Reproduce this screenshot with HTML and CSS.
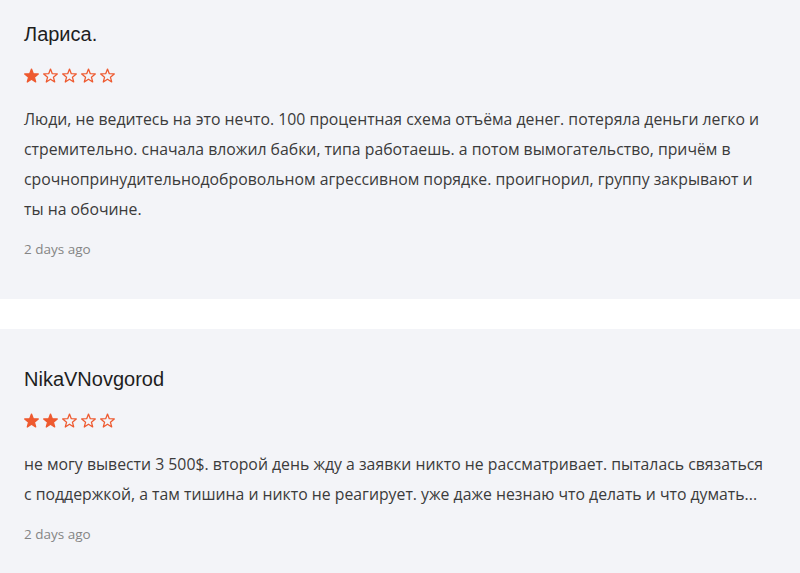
FILE: index.html
```html
<!DOCTYPE html>
<html>
	<head>
		<meta charset="UTF-8">
		<title>Отзывы</title>
		<link rel="stylesheet" href="styles.css">
	</head>
	<body>
		<svg width="0" height="0" class="defs">
			<symbol id="star" viewBox="-1 -1 21.02 20.09">
				<polygon points="9.51,0 12.04,6.52 19.02,6.91 13.6,11.33 15.39,18.09 9.51,14.3 3.63,18.09 5.42,11.33 0,6.91 6.98,6.52"/>
			</symbol>
		</svg>
		<div class="reviews">
			<div class="review">
				<h3 class="name">Лариса.</h3>
				<div class="stars">
					<svg class="on"><use href="#star"/></svg>
					<svg><use href="#star"/></svg>
					<svg><use href="#star"/></svg>
					<svg><use href="#star"/></svg>
					<svg><use href="#star"/></svg>
				</div>
				<p class="text">Люди, не ведитесь на это нечто. 100 процентная схема отъёма денег. потеряла деньги легко и стремительно. сначала вложил бабки, типа работаешь. а потом вымогательство, причём в срочнопринудительнодобровольном агрессивном порядке. проигнорил, группу закрывают и ты на обочине.</p>
				<div class="date">2 days ago</div>
			</div>
			<div class="review">
				<h3 class="name">NikaVNovgorod</h3>
				<div class="stars">
					<svg class="on"><use href="#star"/></svg>
					<svg class="on"><use href="#star"/></svg>
					<svg><use href="#star"/></svg>
					<svg><use href="#star"/></svg>
					<svg><use href="#star"/></svg>
				</div>
				<p class="text">не могу вывести 3 500$. второй день жду а заявки никто не рассматривает. пыталась связаться с поддержкой, а там тишина и никто не реагирует. уже даже незнаю что делать и что думать...</p>
				<div class="date">2 days ago</div>
			</div>
		</div>
	</body>
</html>
```

FILE: styles.css
```css
*{
	margin: 0;
	padding: 0;
}
body{
	background: #fff;
	font-family: "Open Sans", "Noto Sans", sans-serif;
	overflow: hidden;
}
.defs{
	position: absolute;
}
.reviews{
	margin-top: -16px;
}
.review{
	background: #f3f4f8;
	padding: 38px 28px 40px 24px;
	margin-bottom: 30px;
}
.name{
	font-family: "Liberation Sans", Arial, sans-serif;
	font-size: 20px;
	line-height: 24px;
	font-weight: normal;
	color: #1e1e1e;
}
.stars{
	display: flex;
	gap: 4px;
	height: 15px;
	margin-top: 22px;
}
.stars svg{
	width: 15px;
	height: 15px;
	fill: none;
	stroke: #ee5a30;
	stroke-width: 1.8;
	stroke-linejoin: round;
}
.stars svg.on{
	fill: #ee5a30;
}
.text{
	margin-top: 21px;
	font-size: 15.8px;
	line-height: 30px;
	color: #3b3b3b;
}
.date{
	margin-top: 15px;
	font-size: 13.5px;
	line-height: 20px;
	color: #858585;
}
```
